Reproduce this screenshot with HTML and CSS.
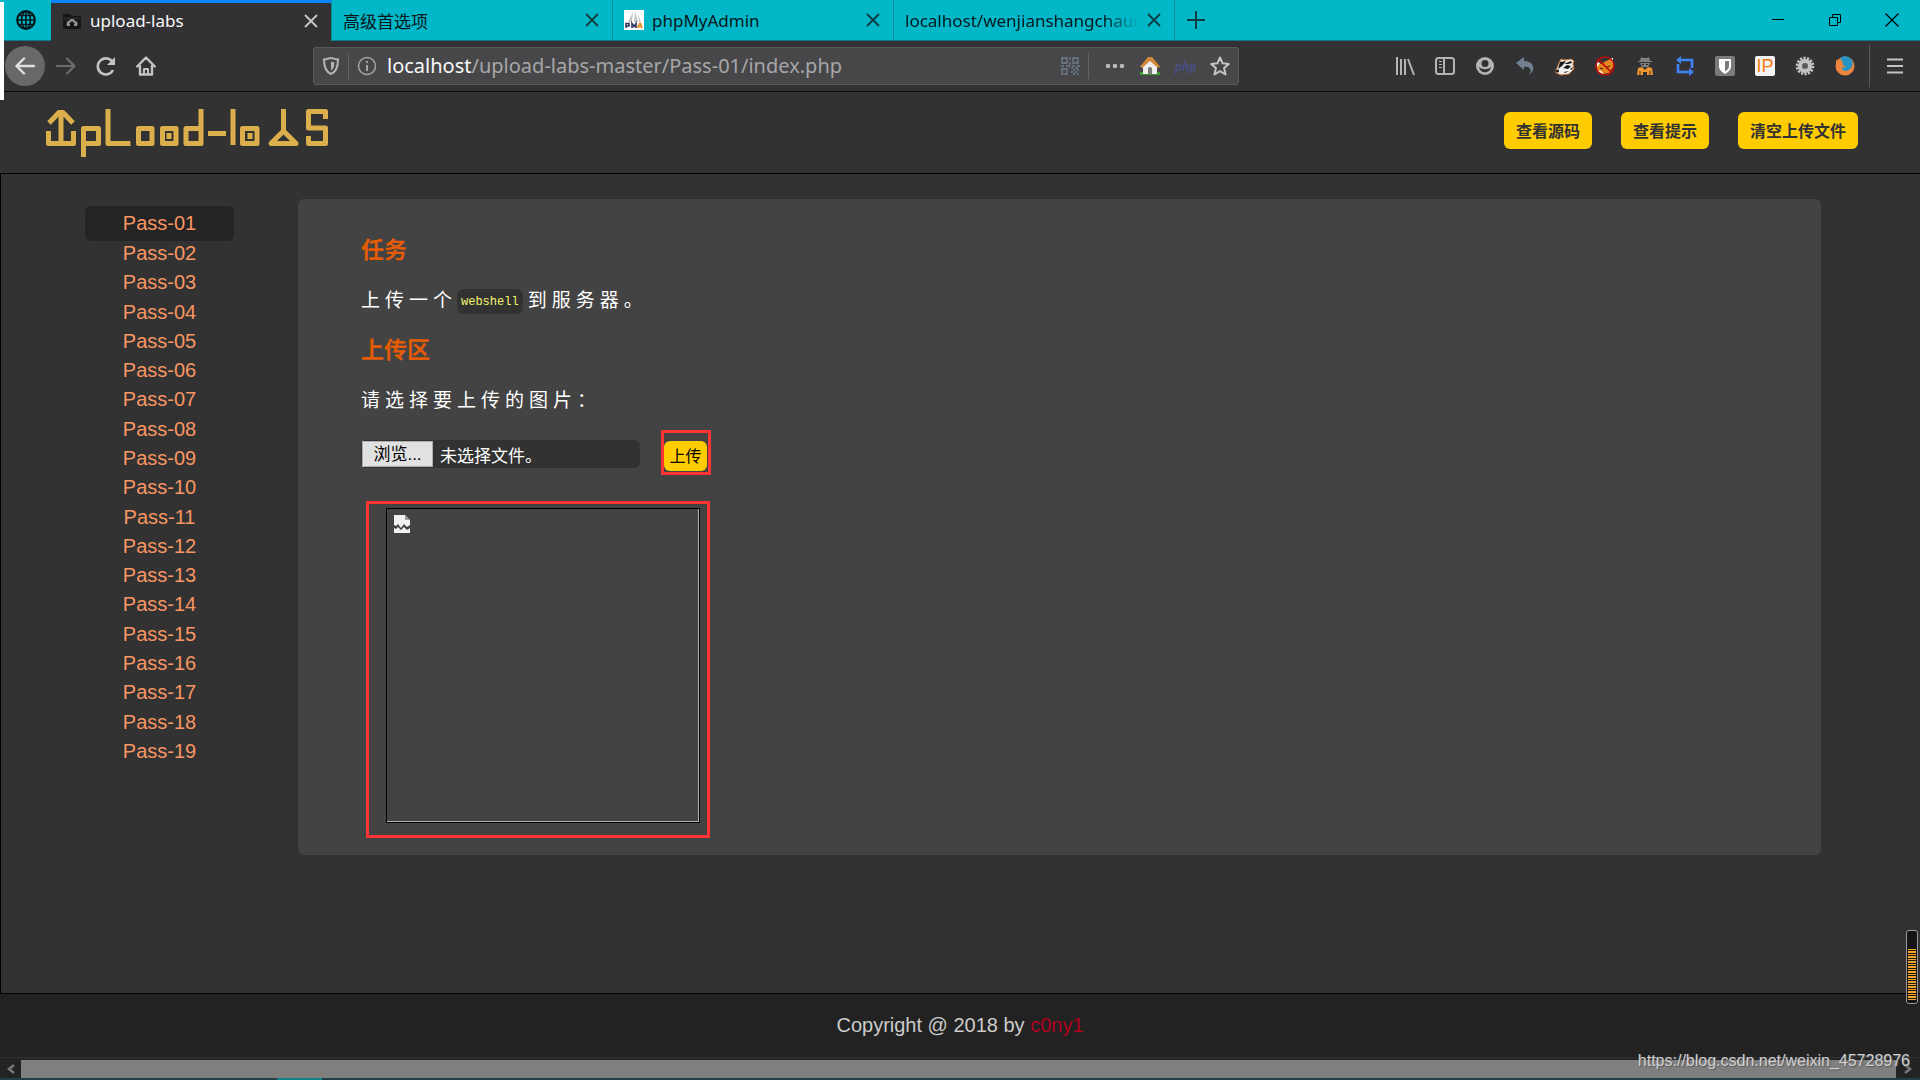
FILE: index.html
```html
<!DOCTYPE html>
<html lang="zh-CN">
<head>
<meta charset="utf-8">
<meta name="viewport" content="width=device-width, initial-scale=1">
<title>upload-labs</title>
<link rel="stylesheet" href="styles.css">
</head>
<body>
<div class="edge-strip"></div>
<header class="tabbar">
  <button class="tab-pin" aria-label="Pinned tab">
    <svg width="20" height="20" viewBox="0 0 20 20" fill="none" stroke="#06181c" stroke-width="1.6"><circle cx="10" cy="10" r="8.8" stroke-width="2.2"/><ellipse cx="10" cy="10" rx="4.4" ry="8.8"/><path d="M10 1v18M1 10h18M3 5.5h14M3 14.500h14"/></svg>
  </button>
  <div class="tab tab-active">
    <svg width="20" height="20" viewBox="0 0 20 20"><path d="M1 3h7l2 2h9v13H1z" fill="#161616"/><path d="M1 6h18v3H1z" fill="#242424"/><path d="M5 15c-1-3 0-5 2-5 1-3 5-3 6 0 3 0 3 3 2 5h-3v-2h1l-3-3-3 3h1v2z" fill="#909090"/></svg>
    <span class="tab-title">upload-labs</span>
    <button class="tab-close" aria-label="Close"><svg width="14" height="14" viewBox="0 0 14 14" fill="none" stroke="currentColor" stroke-width="1.8"><path d="M1 1l12 12M13 1L1 13"/></svg></button>
  </div>
  <div class="tab">
    <span class="tab-title">高级首选项</span>
    <button class="tab-close" aria-label="Close"><svg width="14" height="14" viewBox="0 0 14 14" fill="none" stroke="currentColor" stroke-width="1.8"><path d="M1 1l12 12M13 1L1 13"/></svg></button>
  </div>
  <div class="tab">
    <svg width="20" height="20" viewBox="0 0 20 20"><path d="M0 0h20v20H0z" fill="#fff"/><path d="M9 2L4 12h4zM11 1l-1 11h4zM14 4l1 8h2z" fill="#c4c4c4"/><path d="M2 18v-4.500h3v2.500H2M8 18v-4.500l2 3 2-3V18" stroke="#33365e" stroke-width="1.600" fill="none"/><path d="M13.500 18l2-4.500h1l1.500 4.500M14 16.500h4" stroke="#e08a1a" stroke-width="1.600" fill="none"/></svg>
    <span class="tab-title">phpMyAdmin</span>
    <button class="tab-close" aria-label="Close"><svg width="14" height="14" viewBox="0 0 14 14" fill="none" stroke="currentColor" stroke-width="1.8"><path d="M1 1l12 12M13 1L1 13"/></svg></button>
  </div>
  <div class="tab">
    <span class="tab-title tab-fade">localhost/wenjianshangchaun</span>
    <button class="tab-close" aria-label="Close"><svg width="14" height="14" viewBox="0 0 14 14" fill="none" stroke="currentColor" stroke-width="1.8"><path d="M1 1l12 12M13 1L1 13"/></svg></button>
  </div>
  <button class="tab-new" aria-label="New tab"><svg width="18" height="18" viewBox="0 0 18 18" stroke="#0b3d42" stroke-width="2"><path d="M9 0v18M0 9h18"/></svg></button>
  <div class="window-controls">
    <button aria-label="Minimize"><svg width="14" height="14" viewBox="0 0 14 14" fill="none" stroke="#000"><path d="M1 6.500h12"/></svg></button>
    <button aria-label="Restore"><svg width="14" height="14" viewBox="0 0 14 14" fill="none" stroke="#000"><path d="M1.500 4.500h8v8h-8zM4.500 4V1.500h8v8H10"/></svg></button>
    <button aria-label="Close window"><svg width="14" height="14" viewBox="0 0 14 14" fill="none" stroke="#000" stroke-width="1.200"><path d="M.5.5l13 13M13.500.5l-13 13"/></svg></button>
  </div>
</header>

<nav class="toolbar">
  <div class="nav-buttons">
    <button class="back" aria-label="Back"><svg width="20" height="20" viewBox="0 0 20 20" fill="none" stroke="#e0e0e0" stroke-width="2.400" stroke-linecap="round" stroke-linejoin="round"><path d="M19 10H2M9 2.500L1.500 10 9 17.500"/></svg></button>
    <button aria-label="Forward"><svg width="20" height="20" viewBox="0 0 20 20" fill="none" stroke="#6c6c6e" stroke-width="2.200" stroke-linecap="round" stroke-linejoin="round"><path d="M1 10h17M11 2.500l7.500 7.500-7.500 7.500"/></svg></button>
    <button aria-label="Reload"><svg width="20" height="20" viewBox="0 0 20 20" fill="none" stroke="#c4c4c6" stroke-width="2.600"><path d="M16.800 6.500A8 8 0 1 0 17 14"/><path d="M19 1v8h-8z" fill="#c4c4c6" stroke="none"/></svg></button>
    <button aria-label="Home"><svg width="20" height="20" viewBox="0 0 20 20" fill="none" stroke="#c4c4c6" stroke-width="2.400" stroke-linejoin="round" stroke-linecap="round"><path d="M1.200 10.500L10 1.500l8.800 9M4 10v8.500h12V10"/><path d="M8 18v-5h4v5" stroke-width="2"/></svg></button>
  </div>
  <div class="urlbar">
    <svg width="18" height="20" viewBox="0 0 18 20" fill="none" stroke="#b4b4b6" stroke-width="2"><path d="M2 3.500C5 3.500 7 2 9 2s4 1.500 7 1.500C16 11 14 16 9 18 4 16 2 11 2 3.500z"/><path d="M9 5.500v9c2-1.500 3.500-4 3.500-8z" fill="#b4b4b6" stroke="none"/></svg>
    <span class="url-divider"></span>
    <svg width="20" height="20" viewBox="0 0 20 20" fill="none" stroke="#a4a4a6" stroke-width="1.500"><circle cx="10" cy="10" r="8.500"/><path d="M10 9v6M10 5v2" stroke-width="2"/></svg>
    <span class="url"><b>localhost</b>/upload-labs-master/Pass-01/index.php</span>
    <svg width="20" height="20" viewBox="0 0 20 20" fill="none" stroke="#66717e" stroke-width="1.800"><path d="M2 2h5v5H2zM13 2h5v5h-5zM2 13h5v5H2zM10 1v3M10 6v3M1 10h3M6 10h4M12 10h3M17 10h3M11 12h2M15 12h3M13 14h2M17 14h2M11 16h2M15 16h2M13 18h2M17 18h2"/></svg>
    <span class="url-divider"></span>
    <div class="page-actions">
      <svg width="20" height="20" viewBox="0 0 20 20" fill="#b8b8ba"><circle cx="3" cy="10" r="2.300"/><circle cx="10" cy="10" r="2.300"/><circle cx="17" cy="10" r="2.300"/></svg>
      <svg width="20" height="20" viewBox="0 0 20 20"><path d="M0 16h20v3H0z" fill="#3f9a35"/><path d="M3 9l7-6 7 6v9H3z" fill="#eee"/><path d="M0 10.500L8 1h4l8 9.500-2 1.500-8-7-8 7z" fill="#d08b3a"/><path d="M8 18v-6q2-2 4 0v6z" fill="#7b7b7b"/></svg>
      <span class="php">php</span>
      <svg width="20" height="20" viewBox="0 0 20 20" fill="none" stroke="#c4c4c6" stroke-width="2" stroke-linejoin="round"><path d="M10 1.500l2.600 5.800 6.200.6-4.700 4.200 1.400 6.400L10 15.200l-5.500 3.300 1.400-6.400L1.200 7.900l6.200-.6z"/></svg>
    </div>
  </div>
  <div class="extensions">
    <svg width="20" height="20" viewBox="0 0 20 20" stroke="#b4b4b6" stroke-width="2" fill="none"><path d="M2 1v18M6 3v16M10 3v16M13 3l6 16"/></svg>
    <svg width="20" height="20" viewBox="0 0 20 20" stroke="#b4b4b6" fill="none" stroke-width="2"><rect x="1" y="2" width="18" height="16" rx="2.500"/><path d="M9 2v16"/><path d="M4 5.500h3M4 8.500h3M4 11.500h3" stroke-width="1.200"/></svg>
    <svg width="20" height="20" viewBox="0 0 20 20"><circle cx="10" cy="10" r="9" fill="#b4b4b6"/><circle cx="10" cy="7.500" r="3.500" fill="#323234"/><path d="M4 11c1 7 11 7 12 0-3 3-9 3-12 0z" fill="#323234"/></svg>
    <svg width="20" height="20" viewBox="0 0 20 20"><path d="M1 7l8-6v4c9 0 13 8 5 14 4-6 0-9-5-8v3z" fill="#73808f"/></svg>
    <svg width="20" height="20" viewBox="0 0 20 20"><path d="M1 14L4 7l2-4 4 1 6-1 3 2-1 3 1 5-5 5-8 1-5-2z" fill="#eee" stroke="#c8702a"/><path d="M5 6l6-1-4 5-4 3zM9 8l7-3 1 2-4 1zM8 12l4-3 4 1-3 3zM15 13l3-2-1 3zM9 16l5-1-4 2z" fill="#181818"/><circle cx="2.500" cy="15" r="1.500" fill="#111"/></svg>
    <svg width="20" height="20" viewBox="0 0 20 20"><path d="M2 6l4 2 5-3 7-3v9l-4 6-8 1-4-5z" fill="#e8861c"/><path d="M2 14l4 1 3 3-5-1zM15 3l3-1v6zM2 6l3 1-3 4z" fill="#fff"/><path d="M5 12l3 1M12 11l3-1" stroke="#222"/><circle cx="10" cy="10" r="9" fill="none" stroke="#c00b0b" stroke-width="1.500"/><path d="M3.600 3.600l12.800 12.800" stroke="#c00b0b" stroke-width="1.500"/></svg>
    <svg width="20" height="20" viewBox="0 0 20 20"><path d="M6 1l2 1h4l2-1 1 4h2v1H3V5h2zM5 7h10l-2 4H7z" fill="#818181"/><path d="M7 8h2v1H7zM11 8h2v1h-2z" fill="#222"/><path d="M3 12l4-1 3 3 3-3 4 1 1 7h-6v-3H8v3H2z" fill="#ee982f"/><path d="M5 19v-4M15 19v-4" stroke="#4e3920"/></svg>
    <svg width="20" height="20" viewBox="0 0 20 20" fill="none" stroke="#3f83f5" stroke-width="2.600"><path d="M5 4h12v8M3 8v8h12"/><path d="M1 4l5-4v8zM19 16l-5-4v8z" fill="#3f83f5" stroke="none"/></svg>
    <svg width="20" height="20" viewBox="0 0 20 20"><rect width="20" height="20" rx="2" fill="#7b7b7b"/><path d="M4 3h12v7c0 4-3 6-6 8-3-2-6-4-6-8z" fill="#fff"/><path d="M10 5h4v5c0 3-2 4-4 5.500z" fill="#7b7b7b"/></svg>
    <span class="ip">IP</span>
    <svg width="20" height="20" viewBox="0 0 20 20" fill="none" stroke="#c3c3c3"><circle cx="10" cy="10" r="7.800" stroke-width="3" stroke-dasharray="2.200 1.300"/><circle cx="10" cy="10" r="5" stroke-width="4"/><circle cx="10" cy="10" r="2.500" fill="#555" stroke="#777"/></svg>
    <svg width="20" height="20" viewBox="0 0 20 20"><circle cx="10" cy="10" r="9.500" fill="#ed853c"/><path d="M5 2c4-3 9-2 12 2 2 5-1 10-6 11-3 0-5-2-4-4 2 1 3 0 4-1-3 0-4-2-3-3-1-2-2-3-3-5z" fill="#2794c2"/><path d="M1 4l4 2 3 2-1 2 2 1-3 1-5-1z" fill="#ed853c"/></svg>
  </div>
  <button class="menu" aria-label="Menu"><svg width="16" height="16" viewBox="0 0 16 16" stroke="#c4c4c6" stroke-width="2"><path d="M0 1.500h16M0 8h16M0 14.500h16"/></svg></button>
</nav>

<header class="site-header">
  <a href="#" class="logo" aria-label="upload-labs">
    <svg width="284" height="50" viewBox="0 0 284 50" fill="none" stroke="#dbb04c" stroke-width="5" stroke-linejoin="round">
      <path d="M2.500 22v12.500h25V22M15 34V4M3 14L13 3.500h4L27 14"/>
      <path d="M37.500 48V19.500h15v15H38"/>
      <path d="M62 0v34.500h22.500"/>
      <path d="M92.500 19.500H106v15H92.500z"/>
      <path d="M116.500 19.500H130v15h-13.500zM123 24v6"/>
      <path d="M155 0v34.500h-15v-15h14M162 24.500h18M187 0v36"/>
      <path d="M196.500 19.500H211v15h-14.500zM204 24v6"/>
      <path d="M237.500 0v22M237.500 22L225 34.500h25z"/>
      <path d="M279.500 10V2.500h-17V19h17v15.500h-17V27"/>
    </svg>
  </a>
  <div class="actions">
    <button>查看源码</button>
    <button>查看提示</button>
    <button>清空上传文件</button>
  </div>
</header>

<main class="page">
  <ul class="pass-list">
    <li class="current"><a href="#">Pass-01</a></li>
    <li><a href="#">Pass-02</a></li>
    <li><a href="#">Pass-03</a></li>
    <li><a href="#">Pass-04</a></li>
    <li><a href="#">Pass-05</a></li>
    <li><a href="#">Pass-06</a></li>
    <li><a href="#">Pass-07</a></li>
    <li><a href="#">Pass-08</a></li>
    <li><a href="#">Pass-09</a></li>
    <li><a href="#">Pass-10</a></li>
    <li><a href="#">Pass-11</a></li>
    <li><a href="#">Pass-12</a></li>
    <li><a href="#">Pass-13</a></li>
    <li><a href="#">Pass-14</a></li>
    <li><a href="#">Pass-15</a></li>
    <li><a href="#">Pass-16</a></li>
    <li><a href="#">Pass-17</a></li>
    <li><a href="#">Pass-18</a></li>
    <li><a href="#">Pass-19</a></li>
  </ul>
  <section class="panel">
    <h3>任务</h3>
    <p>上传一个<code>webshell</code>到服务器。</p>
    <h3>上传区</h3>
    <p>请选择要上传的图片：</p>
    <form class="upload-row">
      <label class="file-field">
        <input type="file" class="file-input">
        <span class="browse">浏览...</span>
        <span class="file-name">未选择文件。</span>
      </label>
      <div class="mark"><button type="button" class="submit">上传</button></div>
    </form>
    <div class="mark preview-mark">
      <div class="preview">
        <svg width="16" height="18" viewBox="0 0 16 18"><path d="M0 0h11l5 5v5l-3 2-3-3-3 4-3-4-2 2-2-1z" fill="#f2f2f2"/><path d="M11 0v5h5z" fill="#9a9a9a"/><path d="M0 13l2 1 2-2 3 3 3-3 3 3 3-2v5H0z" fill="#f2f2f2"/></svg>
      </div>
    </div>
  </section>
</main>

<footer class="site-footer">Copyright @ 2018 by&nbsp;<a href="#">c0ny1</a></footer>
<div class="scrollbar">
  <button aria-label="Scroll left"><svg width="8" height="10" viewBox="0 0 8 10" fill="none" stroke="#77777a" stroke-width="2.500"><path d="M7 1L2 5l5 4"/></svg></button>
  <div class="thumb"></div>
  <button aria-label="Scroll right"><svg width="8" height="10" viewBox="0 0 8 10" fill="none" stroke="#77777a" stroke-width="2.500"><path d="M1 1l5 4-5 4"/></svg></button>
</div>
<div class="taskbar-edge"><span></span></div>
<div class="meter"><span></span></div>
<div class="watermark">https://blog.csdn.net/weixin_45728976</div>
</body>
</html>
```

FILE: styles.css
```css
* { box-sizing: border-box; }
body {
  margin: 0;
  min-height: 100vh;
  display: flex;
  flex-direction: column;
  position: relative;
  overflow-x: hidden;
  background: #323232;
  font-family: "Liberation Sans", "Noto Sans CJK SC", sans-serif;
}
button {
  border: 0;
  padding: 0;
  background: none;
  font: inherit;
  color: inherit;
  display: flex;
  align-items: center;
  justify-content: center;
}
svg { display: block; flex: none; }
a { text-decoration: none; }

.edge-strip {
  position: absolute;
  left: 0;
  top: 2px;
  width: 4px;
  height: 98px;
  background: #fff;
}

/* Tab strip */
.tabbar {
  display: flex;
  height: 41px;
  background: #02b7c7;
  border-bottom: 1px solid #067f88;
  font-family: "Noto Sans", "Noto Sans CJK SC", sans-serif;
  font-size: 17px;
  color: #06181c;
}
.tab-pin { width: 51px; }
.tab {
  display: flex;
  align-items: center;
  gap: 8px;
  flex: 0 1 281px;
  min-width: 0;
  padding: 0 13px 0 11px;
  border-right: 1px solid #078b96;
}
.tab-active {
  background: #323234;
  color: #f9f9fa;
  border-top: 3px solid #0a84ff;
  margin-bottom: -1px;
  padding-bottom: 3px;
}
.tab-title { flex: 1; min-width: 0; overflow: hidden; white-space: nowrap; }
.tab-fade { -webkit-mask-image: linear-gradient(to right, #000 85%, transparent); mask-image: linear-gradient(to right, #000 85%, transparent); }
.tab-close { color: #0b3d42; }
.tab-active .tab-close { color: #c8c8c8; }
.tab-new { width: 41px; }
.window-controls { display: flex; margin-left: auto; }
.window-controls button { width: 57px; }

/* Navigation toolbar */
.toolbar {
  display: flex;
  align-items: center;
  height: 51px;
  background: #323234;
  border-bottom: 1px solid #0c0c0d;
}
.nav-buttons { display: flex; padding-left: 5px; width: 313px; }
.nav-buttons button { width: 40px; height: 40px; }
.nav-buttons .back { background: #68686a; border-radius: 50%; margin-right: 1px; }
.urlbar {
  flex: 0 1 926px;
  height: 38px;
  display: flex;
  align-items: center;
  gap: 8px;
  padding: 0 8px;
  background: #474749;
  border: 1px solid #5a5a5c;
  border-radius: 3px;
  font-family: "Noto Sans", sans-serif;
}
.url-divider { width: 1px; height: 26px; background: #626264; }
.page-actions { display: flex; align-items: center; gap: 15px; padding-left: 8px; }
.url { flex: 1; padding-left: 2px; font-size: 20px; line-height: 28px; color: #a6a6a8; white-space: nowrap; }
.url b { color: #f9f9fa; font-weight: 400; }
.php { width: 20px; text-align: center; font-size: 12px; font-style: italic; font-weight: 600; color: #46518b; }
.extensions { display: flex; gap: 20px; margin-left: auto; padding-right: 14px; }
.ip {
  width: 20px;
  height: 20px;
  background: #f4f4f4;
  border-radius: 2px;
  color: #f57c10;
  font: 400 18px/20px "Liberation Sans", sans-serif;
  text-align: center;
}
.menu { width: 51px; height: 42px; border-left: 1px solid #5a5a5c; }

/* Site header */
.site-header {
  display: flex;
  justify-content: space-between;
  height: 82px;
  padding: 17px 62px 0 46px;
  border-bottom: 1px solid #000;
}
.actions { display: flex; gap: 29px; padding-top: 3px; }
.actions button {
  height: 37px;
  padding: 0 12px 2px;
  border-radius: 6px;
  background: #fc0;
  color: #323232;
  font-size: 16px;
  font-weight: 700;
}

/* Main area */
.page {
  flex: 1;
  display: flex;
  align-items: flex-start;
  padding: 25px 99px 25px 84px;
  border-left: 1px solid #000;
}
.pass-list {
  list-style: none;
  margin: 7px 64px 0 0;
  padding: 0;
  width: 149px;
  height: 562px;
  display: flex;
  flex-direction: column;
  flex: none;
  text-align: center;
  font-size: 20px;
}
.pass-list li { flex: 1; line-height: 24px; }
.pass-list .current { flex: 0 0 35px; background: #242424; border-radius: 6px; line-height: 35px; }
.pass-list a { color: #f79663; }
.panel {
  flex: 1;
  display: flex;
  flex-direction: column;
  align-items: flex-start;
  gap: 12px;
  padding: 31px 63px 17px;
  background: #434343;
  border-radius: 6px;
}
.panel h3 { margin: 0; padding-top: 2px; font-size: 23px; line-height: 36px; color: #e35b06; }
.panel p {
  display: flex;
  align-items: center;
  margin: 0;
  padding-bottom: 2px;
  height: 38px;
  font-size: 19px;
  letter-spacing: 5px;
  color: #fff;
}
.panel code {
  margin: 6px 5px 0 0;
  padding: 0 4px;
  height: 25px;
  border-radius: 6px;
  background: #323232;
  color: #f5f56e;
  font: 12px/27px "Liberation Mono", monospace;
  letter-spacing: 0;
}
.upload-row { display: flex; align-items: flex-start; gap: 21px; }
.file-field {
  position: relative;
  display: flex;
  align-items: center;
  gap: 7px;
  width: 279px;
  height: 28px;
  margin-top: 10px;
  padding: 1px;
  border-radius: 6px;
  background: #323232;
  color: #fff;
  font-size: 17px;
}
.file-input { position: absolute; inset: 0; width: 100%; opacity: 0; }
.browse {
  width: 71px;
  height: 26px;
  line-height: 26px;
  border: 1px solid #adadad;
  background: #e1e1e1;
  color: #000;
  text-align: center;
}
.mark { border: 3px solid #fd3535; }
.upload-row .mark { width: 50px; height: 45px; padding-top: 8px; }
.submit { width: 43px; height: 30px; padding-bottom: 2px; border-radius: 6px; background: #fc0; color: #000; font-size: 16px; font-weight: 400; }
.preview-mark { width: 344px; height: 337px; margin: 14px 0 0 5px; padding: 4px 7px 12px 17px; }
.preview {
  height: 315px;
  padding: 6px 7px;
  border: 1px solid #000;
  box-shadow: inset -1px -1px 0 #b4b4b4;
}

/* Footer */
.site-footer {
  height: 64px;
  border-top: 1px solid #000;
  background: #222;
  color: #ccc;
  font-size: 20px;
  line-height: 62px;
  text-align: center;
}
.site-footer a { color: #b00020; }
.scrollbar {
  display: flex;
  height: 21px;
  padding-top: 2px;
  background: #232325;
  border-top: 1px solid #333;
}
.scrollbar button { width: 21px; }
.scrollbar button:last-child { width: 24px; }
.thumb { flex: 1; background: #7f7f7f; }
.taskbar-edge { height: 2px; background: #204045; }
.taskbar-edge span { display: block; width: 45px; height: 2px; margin-left: 277px; background: #0f8085; }

/* Floating desktop items */
.meter {
  position: absolute;
  right: 2px;
  bottom: 76px;
  width: 12px;
  height: 74px;
  padding: 18px 1px 3px;
  border: 1px solid #999;
  border-radius: 3px;
  background: #141414;
}
.meter span { display: block; height: 100%; background: repeating-linear-gradient(#ffa726 0 1px, #141414 1px 2px, #ffa726 2px 4px, #141414 4px 5px); }
.watermark {
  position: absolute;
  right: 10px;
  bottom: 10px;
  font-size: 16px;
  line-height: 18px;
  color: #d0d0d0;
  text-shadow: 1px 1px 1px #555;
}
```
